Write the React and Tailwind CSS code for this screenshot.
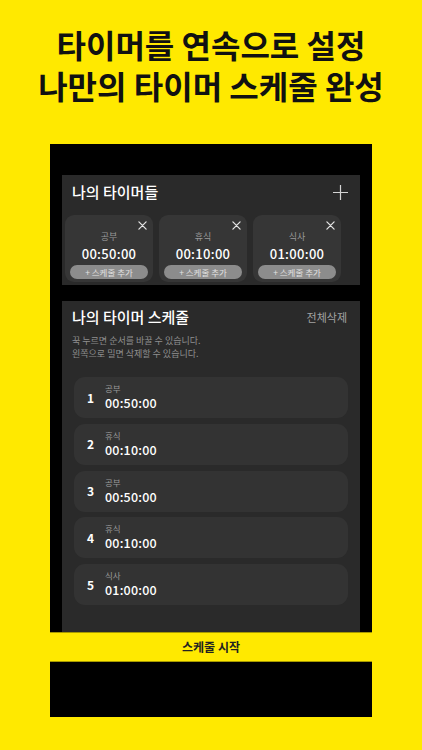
import React from 'react';

const timers = [
  { name: '공부', time: '00:50:00' },
  { name: '휴식', time: '00:10:00' },
  { name: '식사', time: '01:00:00' },
];

const schedule = [
  { name: '공부', time: '00:50:00' },
  { name: '휴식', time: '00:10:00' },
  { name: '공부', time: '00:50:00' },
  { name: '휴식', time: '00:10:00' },
  { name: '식사', time: '01:00:00' },
];

const font = { fontFamily: '"Noto Sans CJK KR", "Noto Sans", sans-serif' };

const CloseIcon = () => (
  <svg width="9" height="9" viewBox="0 0 10 10" fill="none" stroke="#e5e5e5" strokeWidth="1.4" strokeLinecap="round">
    <path d="M1 1L9 9M9 1L1 9" />
  </svg>
);

const PlusIcon = () => (
  <svg width="15" height="15" viewBox="0 0 15 15" fill="none" stroke="#d4d4d4" strokeWidth="1.2">
    <path d="M7.5 0V15M0 7.5H15" />
  </svg>
);

const TimerCard = ({ timer }) => (
  <div className="w-[88px] h-[67px] shrink-0 rounded-[9px] bg-[#363636] flex flex-col items-center relative">
    <div className="absolute top-[6px] right-[6px]">
      <CloseIcon />
    </div>
    <div className="mt-[16px] text-[9px] leading-[12px] text-[#9a9a9a]">{timer.name}</div>
    <div className="mt-[3px] text-[13px] leading-[15px] font-medium text-white tracking-[0.3px]">{timer.time}</div>
    <div className="mt-[4px] w-[78px] h-[14px] rounded-full bg-[#8c8c8c] text-[8.5px] leading-[14px] text-[#e2e2e2] text-center">
      + 스케줄 추가
    </div>
  </div>
);

const ScheduleItem = ({ index, item }) => (
  <div className="h-[41px] shrink-0 rounded-[11px] bg-[#333333] flex items-center">
    <div className="w-[31px] pl-[13px] text-[12px] font-semibold text-white">{index}</div>
    <div className="flex flex-col -mt-[2px]">
      <div className="text-[8.5px] leading-[12px] text-[#9a9a9a]">{item.name}</div>
      <div className="text-[12.5px] leading-[17px] font-medium text-white tracking-[0.2px]">{item.time}</div>
    </div>
  </div>
);

export default function App() {
  return (
    <div className="w-[422px] h-[750px] bg-[#FFE900] flex flex-col items-center overflow-hidden" style={font}>
      <h1 className="pt-[24px] text-[32px] leading-[41px] font-bold text-[#111111] text-center">
        타이머를 연속으로 설정
        <br />
        나만의 타이머 스케줄 완성
      </h1>

      <div className="mt-[38px] w-[322px] h-[573px] bg-black flex flex-col">
        <div className="px-[12px] pt-[31px]">
          <div className="h-[110px] bg-[#2a2a2a] flex flex-col">
            <div className="h-[32px] flex items-center justify-between pl-[10px] pr-[12px] pt-[2px]">
              <span className="text-[15px] font-medium text-white">나의 타이머들</span>
              <PlusIcon />
            </div>
            <div className="mt-[8px] pl-[3px] flex gap-[6px] overflow-hidden">
              {timers.map((t, i) => (
                <TimerCard key={i} timer={t} />
              ))}
            </div>
          </div>

          <div className="mt-[16px] h-[331px] bg-[#2a2a2a] flex flex-col overflow-hidden">
            <div className="h-[30px] flex items-center justify-between pl-[10px] pr-[13px] pt-[2px]">
              <span className="text-[15px] font-medium text-white">나의 타이머 스케줄</span>
              <span className="text-[11px] text-[#a3a3a3]">전체삭제</span>
            </div>
            <div className="pl-[10px] mt-[3px] text-[9px] leading-[13px] text-[#8f8f8f]">
              꾹 누르면 순서를 바꿀 수 있습니다.
              <br />
              왼쪽으로 밀면 삭제할 수 있습니다.
            </div>
            <div className="mt-[17px] px-[12px] flex flex-col gap-[5.8px]">
              {schedule.map((s, i) => (
                <ScheduleItem key={i} index={i + 1} item={s} />
              ))}
            </div>
          </div>
        </div>

        <button className="h-[30px] w-full bg-[#FFE900] border-y border-[#a89a00] text-[12px] font-semibold text-[#222222]">
          스케줄 시작
        </button>
      </div>
    </div>
  );
}
